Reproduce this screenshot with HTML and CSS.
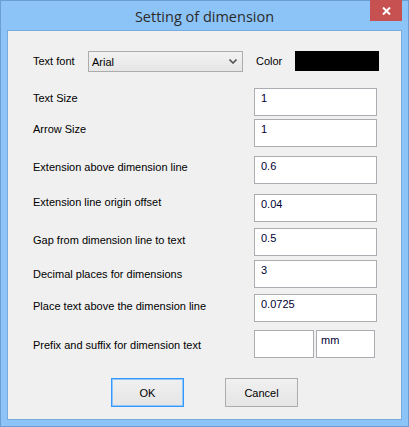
FILE: index.html
```html
<!DOCTYPE html>
<html>
<head>
<meta charset="utf-8">
<link rel="stylesheet" href="styles.css">
</head>
<body>
<div class="window">
  <div class="titlebar">
    <span class="title">Setting of dimension</span>
    <div class="close">
      <svg width="9" height="8" viewBox="0 0 9 8"><path d="M1 0.5 L8 7.5 M8 0.5 L1 7.5" stroke="#fff" stroke-width="2" fill="none"/></svg>
    </div>
  </div>
  <div class="panel">
    <div class="font-row">
      <span class="font-label">Text font</span>
      <div class="combo"><span>Arial</span>
        <svg class="chev" width="8" height="5" viewBox="0 0 8 5"><path d="M0.5 0.5 L4 4 L7.5 0.5" stroke="#555" stroke-width="1.6" fill="none"/></svg>
      </div>
      <span class="color-label">Color</span>
      <div class="swatch"></div>
    </div>

    <div class="row r-size"><span class="lbl">Text Size</span><div class="box">1</div></div>
    <div class="row r-arrow"><span class="lbl">Arrow Size</span><div class="box">1</div></div>
    <div class="row r-ext"><span class="lbl">Extension above dimension line</span><div class="box">0.6</div></div>
    <div class="row r-origin"><span class="lbl">Extension line origin offset</span><div class="box">0.04</div></div>
    <div class="row r-gap"><span class="lbl">Gap from dimension line to text</span><div class="box">0.5</div></div>
    <div class="row r-dec"><span class="lbl">Decimal places for dimensions</span><div class="box">3</div></div>
    <div class="row r-place"><span class="lbl">Place text above the dimension line</span><div class="box">0.0725</div></div>
    <div class="row r-prefix"><span class="lbl">Prefix and suffix for dimension text</span>
      <div class="pair"><div class="box small"></div><div class="box small2">mm</div></div>
    </div>

    <div class="buttons">
      <div class="btn default">OK</div>
      <div class="btn">Cancel</div>
    </div>
  </div>
</div>
</body>
</html>
```
FILE: styles.css
```css
html, body {
  margin: 0;
  padding: 0;
  background: #8dc4f7;
}
.window {
  position: relative;
  width: 409px;
  height: 427px;
  box-sizing: border-box;
  border: 1px solid #6a9fd3;
  background: #8dc4f7;
  padding: 0 6px 6px 6px;
  display: flex;
  flex-direction: column;
  font-family: "Liberation Sans", Arial, sans-serif;
  font-size: 11px;
  color: #000;
}
.titlebar {
  height: 29px;
  display: flex;
  align-items: center;
  justify-content: center;
}
.title {
  font-family: "Open Sans", "Noto Sans", sans-serif;
  font-size: 14.5px;
  color: #2b2b2b;
  margin-top: 2px;
}
.close {
  position: absolute;
  top: -1px;
  right: 6px;
  width: 32px;
  height: 21px;
  background: #c75050;
  display: flex;
  align-items: center;
  justify-content: center;
}
.close svg { display: block; margin-top: 1px; }
.panel {
  flex: 1;
  background: #f0f0f0;
  border: 1px solid #77aadd;
  padding: 20px 0 0 25px;
  display: flex;
  flex-direction: column;
}
.font-row {
  display: flex;
  align-items: flex-start;
  height: 21px;
}
.font-label {
  width: 55px;
  line-height: 21px;
}
.combo {
  width: 155px;
  height: 21px;
  box-sizing: border-box;
  border: 1px solid #acacac;
  background: linear-gradient(#f2f2f2, #e6e6e6);
  display: flex;
  align-items: center;
  justify-content: space-between;
  padding: 0 5px 0 3px;
}
.chev { display: block; }
.color-label {
  margin-left: 13px;
  width: 39px;
  line-height: 20px;
}
.swatch {
  width: 84px;
  height: 20px;
  background: #000;
}
.row {
  display: flex;
  align-items: flex-start;
  height: 28px;
}
.lbl {
  width: 221px;
  line-height: 13px;
}
.box {
  width: 123px;
  height: 28px;
  box-sizing: border-box;
  border: 1px solid #abadb3;
  background: #fff;
  padding: 3px 0 0 6px;
  line-height: 13px;
  color: #000033;
}
.pair { display: flex; gap: 2px; }
.box.small { width: 60px; }
.box.small2 { width: 59px; padding-left: 4px; }
.r-size { margin-top: 16px; }
.r-size .lbl { padding-top: 4px; }
.r-arrow { margin-top: 3px; }
.r-arrow .lbl { padding-top: 4px; }
.r-ext { margin-top: 9px; }
.r-ext .lbl { padding-top: 5px; }
.r-origin { margin-top: 10px; }
.r-origin .lbl { padding-top: 2px; }
.r-gap { margin-top: 6px; }
.r-gap .lbl { padding-top: 6px; }
.r-dec { margin-top: 4px; }
.r-dec .lbl { padding-top: 8px; }
.r-place { margin-top: 6px; }
.r-place .lbl { padding-top: 6px; }
.r-prefix { margin-top: 8px; }
.r-prefix .lbl { padding-top: 9px; }
.buttons {
  margin-top: 20px;
  margin-left: -25px;
  display: flex;
  justify-content: center;
  gap: 41px;
}
.btn {
  width: 73px;
  height: 29px;
  box-sizing: border-box;
  border: 1px solid #acacac;
  background: linear-gradient(#f0f0f0, #e5e5e5);
  display: flex;
  align-items: center;
  justify-content: center;
}
.btn.default {
  border-color: #3399ff;
  box-shadow: inset 0 0 0 1px #8ec6fb;
}
```
